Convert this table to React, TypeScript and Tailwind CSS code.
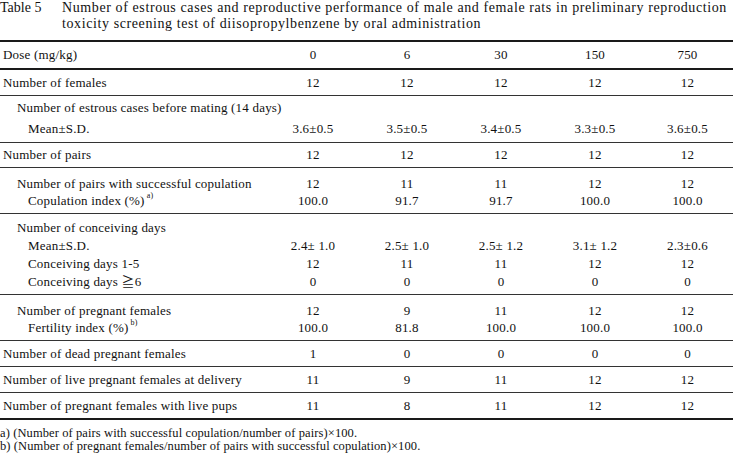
const doses = ["0", "6", "30", "150", "750"];

type Line = { label: React.ReactNode; indent?: 0 | 1 | 2; values?: string[]; h: string };

const indentClass = ["pl-[3px]", "pl-[17px]", "pl-[28px]"];

const Row = ({ label, indent = 0, values, h }: Line) => (
  <div className={`grid grid-cols-[266px_94px_94px_94px_94px_1fr] items-center ${h}`}>
    <div className={`${indentClass[indent]} whitespace-nowrap`}>{label}</div>
    {(values ?? ["", "", "", "", ""]).map((v, i) => (
      <div key={i} className="text-center">
        {v}
      </div>
    ))}
  </div>
);

const Sup = ({ children }: { children: React.ReactNode }) => (
  <span className="text-[8px] align-top relative -top-[1px] ml-[2px]">{children}</span>
);

export default function App() {
  return (
    <div className="w-[735px] h-[453px] bg-white text-[#111] text-[13px] tracking-[0.2px] font-['Liberation_Serif','DejaVu_Serif','Noto_Sans_CJK_JP',serif] overflow-hidden">
      <div className="flex text-[14px] tracking-[0.6px] leading-[16px]">
        <div className="w-[62px] shrink-0 tracking-normal">Table 5</div>
        <div className="whitespace-nowrap">
          Number of estrous cases and reproductive performance of male and female rats in preliminary reproduction
          <br />
          toxicity screening test of diisopropylbenzene by oral administration
        </div>
      </div>

      <div className="mt-[8px] w-[733px] border-t-2 border-[#1a1a1a]">
        <div className="border-b-2 border-[#1a1a1a]">
          <Row h="h-[26px]" label="Dose (mg/kg)" values={doses} />
        </div>
        <div className="border-b border-[#333]">
          <Row h="h-[25px]" label="Number of females" values={["12", "12", "12", "12", "12"]} />
        </div>
        <div className="border-b border-[#333] pt-[2px] pb-[3px]">
          <Row h="h-[20px]" indent={1} label="Number of estrous cases before mating (14 days)" />
          <Row
            h="h-[21px]"
            indent={2}
            label="Mean±S.D."
            values={["3.6±0.5", "3.5±0.5", "3.4±0.5", "3.3±0.5", "3.6±0.5"]}
          />
        </div>
        <div className="border-b border-[#333]">
          <Row h="h-[24px]" label="Number of pairs" values={["12", "12", "12", "12", "12"]} />
        </div>
        <div className="border-b border-[#333] pt-[6px] pb-[5px]">
          <Row
            h="h-[17px]"
            indent={1}
            label="Number of pairs with successful copulation"
            values={["12", "11", "11", "12", "12"]}
          />
          <Row
            h="h-[17px]"
            indent={2}
            label={
              <>
                Copulation index (%)<Sup>a)</Sup>
              </>
            }
            values={["100.0", "91.7", "91.7", "100.0", "100.0"]}
          />
        </div>
        <div className="border-b border-[#333] pt-[4px] pb-[4px]">
          <Row h="h-[18px]" indent={1} label="Number of conceiving days" />
          <Row
            h="h-[18px]"
            indent={2}
            label="Mean±S.D."
            values={["2.4± 1.0", "2.5± 1.0", "2.5± 1.2", "3.1± 1.2", "2.3±0.6"]}
          />
          <Row h="h-[18px]" indent={2} label="Conceiving days 1-5" values={["12", "11", "11", "12", "12"]} />
          <Row h="h-[18px]" indent={2} label="Conceiving days ≧6" values={["0", "0", "0", "0", "0"]} />
        </div>
        <div className="border-b border-[#333] pt-[6px] pb-[5px]">
          <Row
            h="h-[17px]"
            indent={1}
            label="Number of pregnant females"
            values={["12", "9", "11", "12", "12"]}
          />
          <Row
            h="h-[17px]"
            indent={2}
            label={
              <>
                Fertility index (%)<Sup>b)</Sup>
              </>
            }
            values={["100.0", "81.8", "100.0", "100.0", "100.0"]}
          />
        </div>
        <div className="border-b border-[#333]">
          <Row h="h-[25px]" label="Number of dead pregnant females" values={["1", "0", "0", "0", "0"]} />
        </div>
        <div className="border-b border-[#333]">
          <Row
            h="h-[25px]"
            label="Number of live pregnant females at delivery"
            values={["11", "9", "11", "12", "12"]}
          />
        </div>
        <div className="border-b-2 border-[#1a1a1a]">
          <Row
            h="h-[25px]"
            label="Number of pregnant females with live pups"
            values={["11", "8", "11", "12", "12"]}
          />
        </div>
      </div>

      <div className="pt-[7px] text-[12.5px] leading-[13px] tracking-[0.1px]">
        <div>a) (Number of pairs with successful copulation/number of pairs)×100.</div>
        <div>b) (Number of pregnant females/number of pairs with successful copulation)×100.</div>
      </div>
    </div>
  );
}
